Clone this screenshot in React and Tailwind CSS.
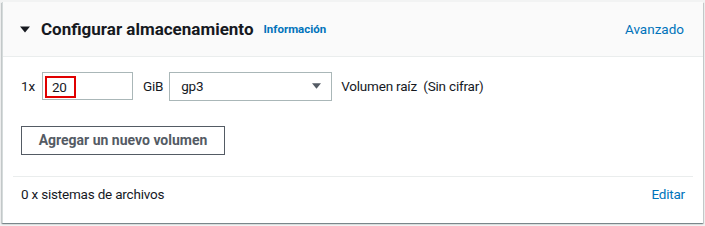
const Caret = ({ className }) => (
  <svg viewBox="0 0 10 6" className={className} fill="currentColor">
    <path d="M0 0h10L5 6z" />
  </svg>
);

export default function App() {
  return (
    <div className="w-[705px] h-[226px] bg-[#f2f3f3] pt-[2px] pl-[2px] pr-[2px] text-[#16191f]" style={{ fontFamily: 'Roboto, "Noto Sans", sans-serif' }}>
      <div className="bg-white border-l border-[#d5dbdb] shadow-[0_1px_1px_0_rgba(0,28,36,0.3),1px_1px_1px_0_rgba(0,28,36,0.15),-1px_1px_1px_0_rgba(0,28,36,0.15)]">
        {/* header */}
        <div className="h-[55px] bg-[#fafafa] border-b border-[#eaeded] flex items-center pl-[17px] pr-[19px]">
          <Caret className="w-[10px] h-[7px] mr-[11px]" />
          <h2 className="text-[17px] font-bold leading-none">Configurar almacenamiento</h2>
          <a className="ml-[10px] text-[11.5px] font-bold text-[#0073bb] mt-[2px]">Información</a>
          <a className="ml-auto text-[13.5px] text-[#0073bb]">Avanzado</a>
        </div>

        {/* body */}
        <div className="px-[10px] text-[13.5px] tracking-[-0.2px]">
          <div className="flex items-center h-[28px] mt-[15px] pl-[8px]">
            <span>1x</span>
            <div className="ml-[7px] w-[91px] h-[28px] border border-[#aab7b8] flex items-center pl-[2px]">
              <span className="w-[31px] h-[22px] border-2 border-[#e00000] flex items-center pl-[5px] mt-[2px]">20</span>
            </div>
            <span className="ml-[10px]">GiB</span>
            <div className="ml-[6px] w-[163px] h-[29px] border border-[#aab7b8] flex items-center pl-[11px] pr-[10px]">
              <span>gp3</span>
              <Caret className="ml-auto w-[9px] h-[6px] text-[#545b64]" />
            </div>
            <span className="ml-[9px]">Volumen raíz&nbsp; (Sin cifrar)</span>
          </div>

          <button className="mt-[26px] ml-[8px] w-[204px] h-[29px] border border-[#545b64] text-[14px] tracking-normal font-bold text-[#545b64] flex items-center justify-center">
            Agregar un nuevo volumen
          </button>

          <div className="mt-[21px] border-t border-[#eaeded] pt-[7px] pb-[19px] flex items-center pl-[8px] pr-[8px] leading-[20px]">
            <span>0 x sistemas de archivos</span>
            <a className="ml-auto text-[#0073bb]">Editar</a>
          </div>
        </div>
      </div>
    </div>
  );
}
